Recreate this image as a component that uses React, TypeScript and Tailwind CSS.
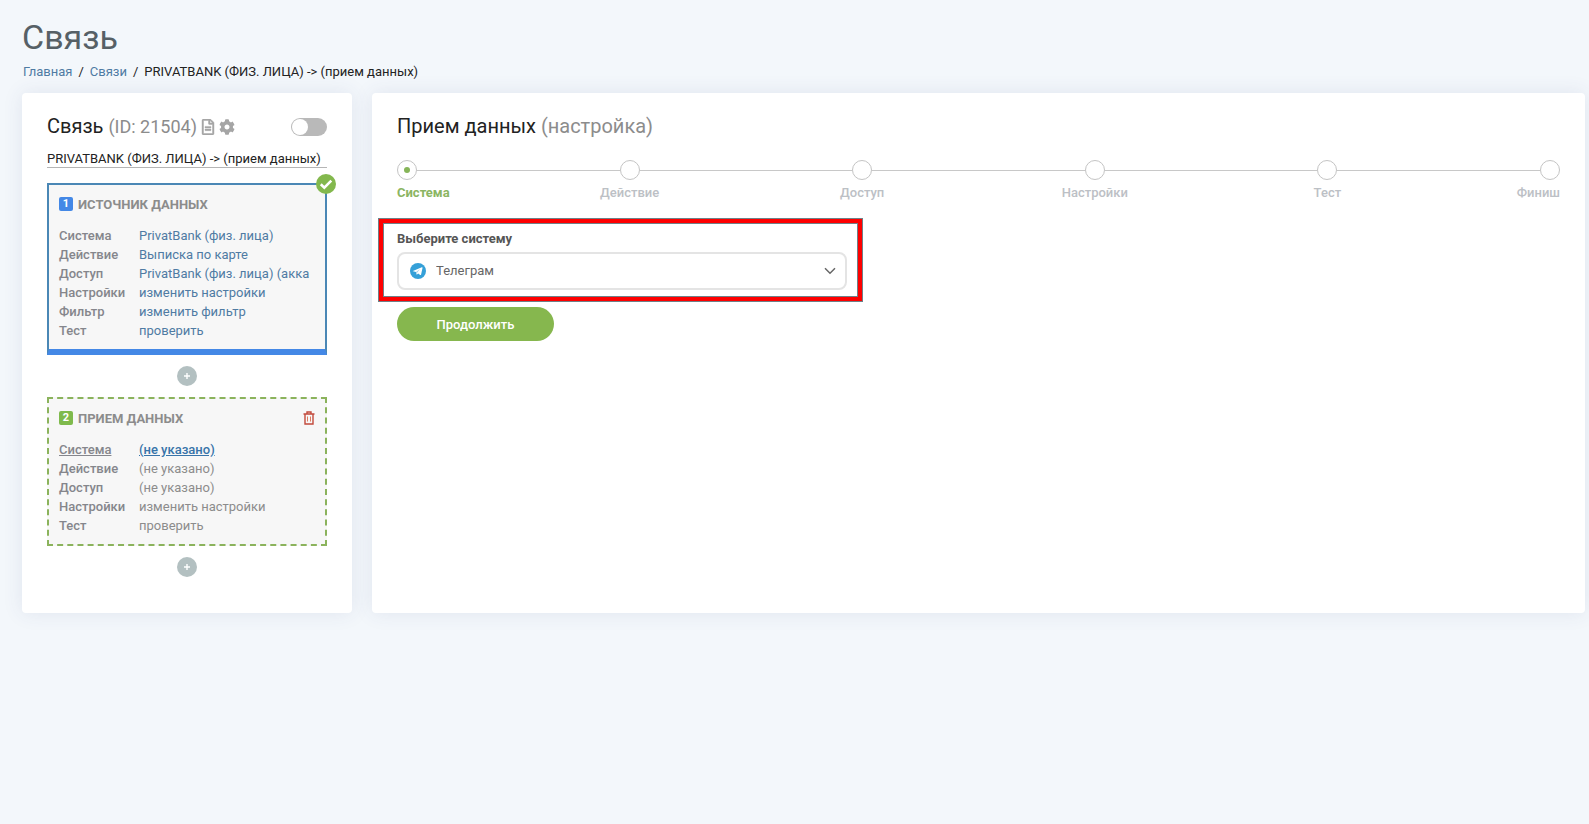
import { FaCog, FaRegFileAlt } from "react-icons/fa";

type Row = { label: string; value: string; current?: boolean };

const sourceRows: Row[] = [
  { label: "Система", value: "PrivatBank (физ. лица)" },
  { label: "Действие", value: "Выписка по карте" },
  { label: "Доступ", value: "PrivatBank (физ. лица) (акка" },
  { label: "Настройки", value: "изменить настройки" },
  { label: "Фильтр", value: "изменить фильтр" },
  { label: "Тест", value: "проверить" },
];

const targetRows: Row[] = [
  { label: "Система", value: "(не указано)", current: true },
  { label: "Действие", value: "(не указано)" },
  { label: "Доступ", value: "(не указано)" },
  { label: "Настройки", value: "изменить настройки" },
  { label: "Тест", value: "проверить" },
];

const steps = ["Система", "Действие", "Доступ", "Настройки", "Тест", "Финиш"];

function Rows({ rows, linkClass }: { rows: Row[]; linkClass: string }) {
  return (
    <dl className="leading-[19px]">
      {rows.map((row) => (
        <div key={row.label} className="flex">
          <dt
            className={`w-20 shrink-0 font-medium text-[#85868c] ${row.current ? "underline" : ""}`}
          >
            {row.label}
          </dt>
          <dd className="min-w-0 flex-1 overflow-hidden whitespace-nowrap">
            <a
              href="#"
              className={row.current ? "font-medium text-[#3874a9] underline" : linkClass}
            >
              {row.value}
            </a>
          </dd>
        </div>
      ))}
    </dl>
  );
}

function AddButton() {
  return (
    <button
      type="button"
      aria-label="Добавить"
      className="mx-auto flex size-5 items-center justify-center rounded-full bg-[#b3c0c1]"
    >
      <svg viewBox="0 0 8 8" className="size-2" stroke="#fff" strokeWidth="1.4">
        <path d="M4 1v6M1 4h6" />
      </svg>
    </button>
  );
}

function Step({ label, index }: { label: string; index: number }) {
  const first = index === 0;
  const last = index === steps.length - 1;
  const active = first;
  const size = first || last ? "flex-1" : "flex-2";
  const align = first ? "text-left" : last ? "text-right" : "text-center";
  return (
    <li className={`basis-0 ${size} ${align}`}>
      <div className="flex items-center">
        {!first && <span className="h-px flex-1 bg-[#c8c8c8]" />}
        <span className="flex size-5 shrink-0 items-center justify-center rounded-full border border-[#c4c4c4]">
          {active && <span className="size-1.5 rounded-full bg-[#86b558]" />}
        </span>
        {!last && <span className="h-px flex-1 bg-[#c8c8c8]" />}
      </div>
      <span
        className={`mt-[5px] block leading-4 ${active ? "font-bold text-[#8bb562]" : "font-medium text-[#bcc0c5]"}`}
      >
        {label}
      </span>
    </li>
  );
}

function ConnectionCard() {
  return (
    <section className="w-[330px] shrink-0 rounded-sm bg-white px-[25px] pt-5 pb-9 shadow-[0_0_20px_rgba(60,70,130,0.1)]">
      <div className="flex h-7 items-center">
        <h2 className="pb-0.5 text-xl leading-6 text-[#222]">
          Связь <span className="text-lg leading-6 text-[#8c8c8c]">(ID: 21504)</span>
        </h2>
        <button type="button" aria-label="Описание" className="ml-[3px] text-[#a5a5a5]">
          <FaRegFileAlt size={16} stroke="currentColor" strokeWidth={14} />
        </button>
        <button type="button" aria-label="Параметры" className="ml-[3px] text-[#a5a5a5]">
          <FaCog size={16} />
        </button>
        <label className="ml-auto flex h-[18px] w-9 items-center rounded-full bg-[#b9b9b9] px-px">
          <input type="checkbox" aria-label="Включить связь" className="peer sr-only" />
          <span className="size-4 rounded-full bg-white peer-checked:translate-x-[18px]" />
        </label>
      </div>
      <input
        type="text"
        aria-label="Название связи"
        defaultValue="PRIVATBANK (ФИЗ. ЛИЦА) -> (прием данных)"
        className="mt-2 block h-[19px] w-full border-b border-[#b5b5b5] text-[#222] outline-none"
      />

      <div className="relative mt-[15px] border-2 border-b-6 border-[#4a87b5] border-b-[#4488e6] bg-[#f7f7f7] px-2.5 pt-3 pb-[9px]">
        <span className="absolute -top-[11px] -right-[11px] flex size-5 items-center justify-center rounded-full bg-[#83b84d]">
          <svg viewBox="0 0 20 20" className="size-5" fill="none" stroke="#fff" strokeWidth="2.6">
            <path d="M4.8 10.3l3.5 3.4 7-7" />
          </svg>
        </span>
        <h3 className="flex items-start gap-[5px] pb-[13px] leading-4 font-bold text-[#8c8c8c]">
          <span className="flex size-3.5 items-center justify-center rounded-xs bg-[#4488e6] text-[11px] text-white">1</span>
          ИСТОЧНИК ДАННЫХ
        </h3>
        <Rows rows={sourceRows} linkClass="text-[#4f7ba3]" />
      </div>

      <div className="py-[11px]">
        <AddButton />
      </div>

      <div className="border-2 border-dashed border-[#8bb35c] bg-[#f7f7f7] px-2.5 pt-3 pb-[9px]">
        <div className="flex items-start pb-[13px]">
          <h3 className="flex items-start gap-[5px] leading-4 font-bold text-[#8c8c8c]">
            <span className="flex size-3.5 items-center justify-center rounded-xs bg-[#7fba4c] text-[11px] text-white">2</span>
            ПРИЕМ ДАННЫХ
          </h3>
          <button type="button" aria-label="Удалить" className="ml-auto">
            <svg viewBox="0 0 12 14" className="h-3.5 w-3" fill="none" stroke="#c24a3c">
              <path strokeWidth="1.4" d="M.5 3h11M4 3V1h4v2M2 3v10h8V3" />
              <path d="M4.5 5.5v5M7.5 5.5v5" stroke="#dd7b5e" />
            </svg>
          </button>
        </div>
        <Rows rows={targetRows} linkClass="text-[#8c8c8c]" />
      </div>

      <div className="pt-[11px]">
        <AddButton />
      </div>
    </section>
  );
}

function SetupCard() {
  return (
    <section className="min-w-0 flex-1 rounded-sm bg-white px-[25px] pt-[19px] shadow-[0_0_20px_rgba(60,70,130,0.1)]">
      <h2 className="text-xl leading-7 text-[#222]">
        Прием данных <span className="text-[#8c8c8c]">(настройка)</span>
      </h2>
      <ol className="mt-5 flex">
        {steps.map((label, index) => (
          <Step key={label} label={label} index={index} />
        ))}
      </ol>

      <form>
        <div className="relative mt-[30px] w-[450px] max-w-full">
          <label htmlFor="system" className="block leading-4 font-bold text-[#555]">
            Выберите систему
          </label>
          <div className="relative mt-[5px]">
            <select
              id="system"
              className="block h-[38px] w-full appearance-none rounded-lg border-2 border-[#e4e4e4] bg-white pl-[37px] text-[#666] outline-none"
            >
              <option>Телеграм</option>
            </select>
            <svg viewBox="0 0 16 16" className="pointer-events-none absolute top-[11px] left-[13px] size-4">
              <circle cx="8" cy="8" r="8" fill="#35a0d8" />
              <path
                fill="#fff"
                d="M2.9 7.9l8.9-3.6c.5-.2.9.1.7.8l-1.4 6.5c-.1.5-.5.6-.9.4l-2.1-1.6-1.1 1c-.2.2-.5.1-.5-.2l-.5-2.2-2.9-.8c-.4-.1-.5-.2-.2-.3z"
              />
              <path fill="#9fcde8" d="M6 9l4.2-2.9L7.2 9.6 6.8 11.4z" />
            </svg>
            <svg
              viewBox="0 0 12 8"
              className="pointer-events-none absolute top-[15px] right-[11px] h-2 w-3"
              fill="none"
              stroke="#666"
              strokeWidth="1.5"
            >
              <path d="M1 1.2l5 5 5-5" />
            </svg>
          </div>
          {/* red frame drawing attention to the system picker */}
          <div className="pointer-events-none absolute -top-3 -right-[15px] -bottom-[11px] -left-[18px] border-4 border-[#fe0000] shadow-[0_0_0_1px_#6f8088,inset_0_0_0_1px_#6f8088]" />
        </div>
        <button
          type="button"
          className="mt-[17px] h-[34px] w-[157px] rounded-full bg-[#86b74e] pt-px font-medium text-white"
        >
          Продолжить
        </button>
      </form>
    </section>
  );
}

export default function App() {
  return (
    <div className="min-h-screen bg-[#f3f7fb] pt-[15px] pr-1 pl-[22px] font-[Roboto,sans-serif] text-[13px] leading-4 text-[#222]">
      <h1 className="text-[34px] leading-[44px] text-[#566066]">Связь</h1>
      <nav aria-label="Навигация" className="mt-[5px] pl-px">
        <ol className="flex gap-1.5">
          <li>
            <a href="#" className="text-[#4f7ba3]">Главная</a>
          </li>
          <li aria-hidden="true">/</li>
          <li>
            <a href="#" className="text-[#4f7ba3]">Связи</a>
          </li>
          <li aria-hidden="true">/</li>
          <li>PRIVATBANK (ФИЗ. ЛИЦА) -&gt; (прием данных)</li>
        </ol>
      </nav>
      <main className="mt-[13px] flex gap-5">
        <ConnectionCard />
        <SetupCard />
      </main>
    </div>
  );
}
